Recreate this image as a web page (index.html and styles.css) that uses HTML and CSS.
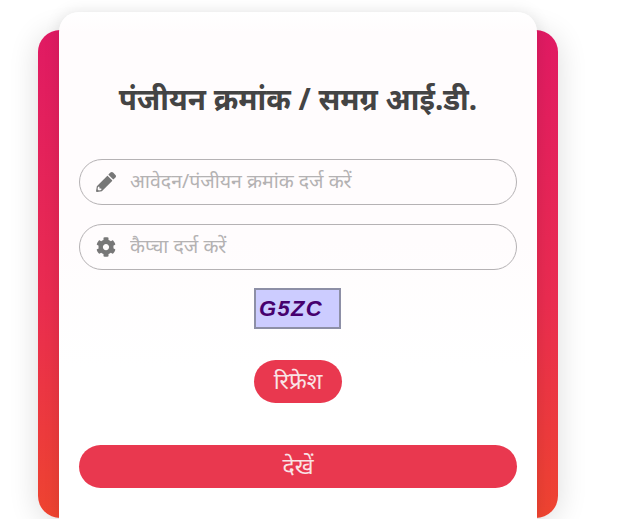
FILE: index.html
```html
<!DOCTYPE html>
<html lang="hi">
<head>
    <meta charset="UTF-8">
    <meta name="viewport" content="width=device-width, initial-scale=1.0">
    <title>पंजीयन क्रमांक</title>
    <link rel="stylesheet" href="styles.css">
</head>
<body>
    <div class="panel">
        <div class="card">
            <h2>पंजीयन क्रमांक / समग्र आई.डी.</h2>
            <form>
                <div class="field">
                    <svg class="field-icon" viewBox="0 0 512 512"><path d="M497.9 142.1l-46.1 46.1c-4.7 4.7-12.3 4.7-17 0l-111-111c-4.7-4.7-4.7-12.3 0-17l46.1-46.1c18.7-18.7 49.1-18.7 67.9 0l60.1 60.1c18.8 18.7 18.8 49.1 0 67.9zM284.2 99.8L21.6 362.4.4 483.9c-2.9 16.4 11.4 30.6 27.8 27.8l121.5-21.3 262.6-262.6c4.7-4.7 4.7-12.3 0-17l-111-111c-4.8-4.7-12.4-4.7-17.1 0zM88 424h48v36.3l-64.5 11.3-31.1-31.1L51.7 376H88v48z"/></svg>
                    <input type="text" placeholder="आवेदन/पंजीयन क्रमांक दर्ज करें">
                </div>
                <div class="field">
                    <svg class="field-icon" viewBox="0 0 512 512"><path d="M487.4 315.7l-42.6-24.6c4.3-23.2 4.3-47 0-70.2l42.6-24.6c4.9-2.8 7.1-8.6 5.5-14-11.1-35.6-30-67.8-54.7-94.6-3.8-4.1-10-5.1-14.8-2.3L380.8 110c-17.9-15.4-38.5-27.3-60.8-35.1V25.8c0-5.6-3.9-10.5-9.4-11.7-36.7-8.2-74.3-7.8-109.2 0-5.5 1.2-9.4 6.1-9.4 11.7V75c-22.2 7.9-42.8 19.8-60.8 35.1L88.7 85.5c-4.9-2.8-11-1.9-14.8 2.3-24.7 26.7-43.6 58.9-54.7 94.6-1.7 5.4.6 11.2 5.5 14L67.3 221c-4.3 23.2-4.3 47 0 70.2l-42.6 24.6c-4.9 2.8-7.1 8.6-5.5 14 11.1 35.6 30 67.8 54.7 94.6 3.8 4.1 10 5.1 14.8 2.3l42.6-24.6c17.9 15.4 38.5 27.3 60.8 35.1v49.2c0 5.6 3.9 10.5 9.4 11.7 36.7 8.2 74.3 7.8 109.2 0 5.5-1.2 9.4-6.1 9.4-11.7v-49.2c22.2-7.9 42.8-19.8 60.8-35.1l42.6 24.6c4.9 2.8 11 1.9 14.8-2.3 24.7-26.7 43.6-58.9 54.7-94.6 1.5-5.5-.7-11.3-5.6-14.1zM256 336c-44.1 0-80-35.9-80-80s35.9-80 80-80 80 35.9 80 80-35.9 80-80 80z"/></svg>
                    <input type="text" placeholder="कैप्चा दर्ज करें">
                </div>
                <div class="captcha">G5ZC</div>
                <button type="button" class="btn btn-refresh">रिफ्रेश</button>
                <button type="submit" class="btn btn-view">देखें</button>
            </form>
        </div>
    </div>
</body>
</html>
```

FILE: styles.css
```css
html, body {
    height: 100%;
    overflow: hidden;
}

body {
    margin: 0;
    background: #fff;
    font-family: "Noto Sans", "Liberation Sans", sans-serif;
}

.panel {
    display: flow-root;
    box-sizing: border-box;
    width: 520px;
    height: 488px;
    margin: 30px 0 0 38px;
    padding: 0 21px;
    border-radius: 22px;
    background: linear-gradient(180deg, #e01a63 0%, #e92c50 55%, #ee4430 100%);
    box-shadow: 0 4px 30px rgba(0, 0, 0, .14);
}

.card {
    box-sizing: border-box;
    height: 507px;
    margin-top: -18px;
    padding: 65px 20px 0;
    border-radius: 20px 20px 0 0;
    background: linear-gradient(180deg, #fff 0, #fffcfd 20px, #fffcfd 45%, #fff 70%);
    box-shadow: 0 0 16px rgba(0, 0, 0, .1);
}

.card h2 {
    margin: 0 0 38px;
    text-align: center;
    color: #444;
    font-size: 29.6px;
    line-height: 44px;
    font-weight: 700;
}

.card form {
    display: flex;
    flex-direction: column;
    align-items: center;
}

.field {
    box-sizing: border-box;
    display: flex;
    align-items: center;
    gap: 14px;
    width: 100%;
    height: 46px;
    margin-bottom: 19px;
    padding: 0 16px;
    border: 1px solid #b5b2b4;
    border-radius: 23px;
}

.field-icon {
    width: 20px;
    height: 20px;
    flex: none;
    fill: #777;
}

.field input {
    flex: 1;
    margin-top: -4px;
    padding: 0;
    border: none;
    outline: none;
    background: none;
    font: 19.5px "Noto Sans", "Liberation Sans", sans-serif;
}

.field input::placeholder {
    color: #b4b2b3;
}

.captcha {
    box-sizing: border-box;
    width: 87px;
    height: 41px;
    margin: -1px 1px 31px 0;
    padding-left: 3px;
    border: 2px solid #8d8fa6;
    background: #ccf;
    color: #46006e;
    font: italic 700 22px/37px "Liberation Sans", sans-serif;
    letter-spacing: 1.3px;
}

.btn {
    border: none;
    padding: 0 0 4px;
    background: #e9384f;
    color: #f9e3e6;
    font: 23px "Noto Sans", "Liberation Sans", sans-serif;
    cursor: pointer;
}

.btn-refresh {
    width: 88px;
    height: 43px;
    margin-bottom: 42px;
    border-radius: 22px;
}

.btn-view {
    width: 100%;
    height: 43px;
    border-radius: 22px;
}
```
